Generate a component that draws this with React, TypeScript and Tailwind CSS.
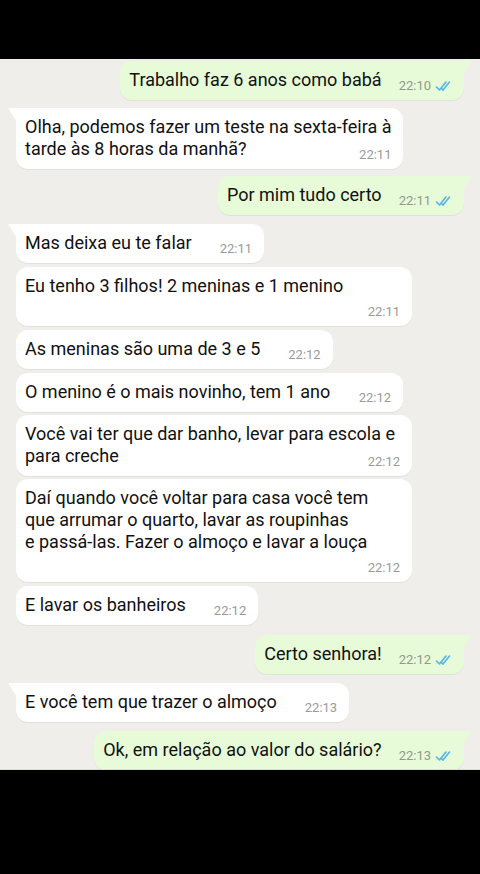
import React from "react";

type Msg = {
  out: boolean;
  lines: string[];
  time: string;
  tail?: boolean;
  below?: boolean;
  mt: string;
  w?: string;
};

const messages: Msg[] = [
  { out: true, tail: true, lines: ["Trabalho faz 6 anos como babá"], time: "22:10", mt: "mt-[2px]" },
  { out: false, tail: true, lines: ["Olha, podemos fazer um teste na sexta-feira à", "tarde às 8 horas da manhã?"], time: "22:11", mt: "mt-[8px]" },
  { out: true, tail: true, lines: ["Por mim tudo certo"], time: "22:11", mt: "mt-[7px]" },
  { out: false, tail: true, lines: ["Mas deixa eu te falar"], time: "22:11", mt: "mt-[9px]" },
  { out: false, lines: ["Eu tenho 3 filhos! 2 meninas e 1 menino"], time: "22:11", below: true, mt: "mt-[4px]", w: "w-[396px]" },
  { out: false, lines: ["As meninas são uma de 3 e 5"], time: "22:12", mt: "mt-[4px]" },
  { out: false, lines: ["O menino é o mais novinho, tem 1 ano"], time: "22:12", mt: "mt-[4px]", w: "w-[387px]" },
  { out: false, lines: ["Você vai ter que dar banho, levar para escola e", "para creche"], time: "22:12", mt: "mt-[3px]", w: "w-[396px]" },
  { out: false, lines: ["Daí quando você voltar para casa você tem", "que arrumar o quarto, lavar as roupinhas", "e passá-las. Fazer o almoço e lavar a louça"], time: "22:12", below: true, mt: "mt-[3px]", w: "w-[396px]" },
  { out: false, lines: ["E lavar os banheiros"], time: "22:12", mt: "mt-[4px]" },
  { out: true, tail: true, lines: ["Certo senhora!"], time: "22:12", mt: "mt-[10px]" },
  { out: false, tail: true, lines: ["E você tem que trazer o almoço"], time: "22:13", mt: "mt-[9px]" },
  { out: true, tail: true, lines: ["Ok, em relação ao valor do salário?"], time: "22:13", mt: "mt-[9px]" },
];

function Ticks() {
  return (
    <svg width="19" height="12" viewBox="0 0 19 12" fill="none" className="ml-[4px]">
      <path d="M1.5 7 L4.5 10 L11 2" stroke="#4fb6ea" strokeWidth="1.6" strokeLinecap="round" strokeLinejoin="round" />
      <path d="M8 10 L14.5 2" stroke="#4fb6ea" strokeWidth="1.6" strokeLinecap="round" />
      <path d="M6.5 8.5 L8 10" stroke="#4fb6ea" strokeWidth="1.6" strokeLinecap="round" />
    </svg>
  );
}

function Time({ m }: { m: Msg }) {
  return (
    <span className={`flex items-center whitespace-nowrap text-[13px] leading-[16px] ${m.out ? "text-[#8f9a8c]" : "text-[#9a9a9a]"}`}>
      {m.time}
      {m.out && <Ticks />}
    </span>
  );
}

function Bubble({ m }: { m: Msg }) {
  const bg = m.out ? "bg-[#e7fbd8]" : "bg-white";
  const corner = m.tail ? (m.out ? "rounded-tr-none" : "rounded-tl-none") : "";
  const last = m.lines.length - 1;
  return (
    <div className={`flex ${m.out ? "justify-end pr-[16px]" : "justify-start pl-[16px]"} ${m.mt}`}>
      <div className={`relative ${m.w ?? ""} ${bg} rounded-[12px] ${corner} pl-[9px] ${m.out ? "pr-[10px]" : "pr-[12px]"} pt-[8px] pb-[9px] shadow-[0_1px_0.5px_rgba(0,0,0,0.06)]`}>
        {m.tail && (
          <svg
            width="9"
            height="14"
            viewBox="0 0 9 14"
            className={`absolute top-0 ${m.out ? "right-[-8px]" : "left-[-8px] -scale-x-100"}`}
          >
            <path d="M0 0 H7.5 Q9 0 8.2 1.3 L0 14 Z" fill={m.out ? "#e7fbd8" : "#ffffff"} />
          </svg>
        )}
        {m.lines.map((l, i) => (
          <div key={i} className="flex items-end justify-between">
            <span className="whitespace-nowrap">{l}</span>
            {i === last && !m.below && (
              <span className={`relative top-[3px] ${m.out ? "ml-[17px]" : "ml-[28px]"}`}>
                <Time m={m} />
              </span>
            )}
          </div>
        ))}
        {m.below && (
          <div className="flex justify-end h-[20px] items-end relative top-[3px]">
            <Time m={m} />
          </div>
        )}
      </div>
    </div>
  );
}

export default function App() {
  return (
    <div className="w-[480px] h-[874px] bg-black flex flex-col font-['Roboto','Noto_Sans',sans-serif] text-[18px] leading-[22px] text-[#111111]">
      <div className="h-[59px] shrink-0" />
      <div className="h-[710px] shrink-0 bg-[#efeeea] overflow-hidden">
        {messages.map((m, i) => (
          <Bubble key={i} m={m} />
        ))}
      </div>
      <div className="h-[1px] bg-[#dcdcd8]" />
    </div>
  );
}
